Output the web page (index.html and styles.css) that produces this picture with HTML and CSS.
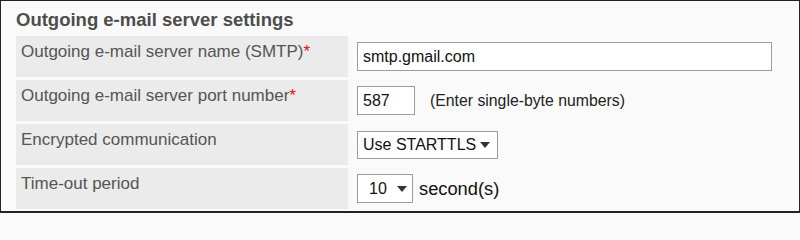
FILE: index.html
```html
<!DOCTYPE html>
<html lang="en">
<head>
<meta charset="utf-8">
<title>Outgoing e-mail server settings</title>
<link rel="stylesheet" href="styles.css">
</head>
<body>
<div class="frame">
  <h2 class="title">Outgoing e-mail server settings</h2>
  <div class="form">
    <div class="label">Outgoing e-mail server name (SMTP)<span class="req">*</span></div>
    <div class="value">
      <input class="input input-wide" type="text" value="smtp.gmail.com">
    </div>

    <div class="label">Outgoing e-mail server port number<span class="req">*</span></div>
    <div class="value">
      <input class="input input-port" type="text" value="587">
      <span class="hint">(Enter single-byte numbers)</span>
    </div>

    <div class="label">Encrypted communication</div>
    <div class="value">
      <div class="select select-tls"><span>Use STARTTLS</span><span class="arrow"></span></div>
    </div>

    <div class="label">Time-out period</div>
    <div class="value">
      <div class="select select-num"><span>10</span><span class="arrow"></span></div>
      <span class="unit">second(s)</span>
    </div>
  </div>
</div>
</body>
</html>
```
FILE: styles.css
```css
html, body {
  margin: 0;
  padding: 0;
  background: #fafafa;
}
body {
  font-family: "Liberation Sans", Arial, Helvetica, sans-serif;
  width: 800px;
  height: 213px;
  overflow: hidden;
}
.frame {
  box-sizing: border-box;
  width: 800px;
  height: 213px;
  border: 1px solid #222;
  border-bottom-width: 2px;
  background: #fafafa;
  padding: 8px 0 0 15px;
}
.title {
  margin: 0 0 5px 0;
  font-size: 18.5px;
  line-height: 22px;
  font-weight: bold;
  color: #4d4d4d;
}
.form {
  display: grid;
  grid-template-columns: 332px 1fr;
  grid-auto-rows: 41px;
  row-gap: 3px;
  column-gap: 3px;
}
.label {
  background: #ebebeb;
  color: #555;
  font-size: 17px;
  line-height: 20px;
  padding: 6px 0 0 5px;
  box-sizing: border-box;
}
.req {
  color: #e01010;
}
.value {
  display: flex;
  align-items: center;
  padding-left: 6px;
  color: #111;
}
.input {
  box-sizing: border-box;
  height: 29px;
  border: 1px solid #9c9c9c;
  background: #fff;
  font-family: "Liberation Sans", Arial, Helvetica, sans-serif;
  font-size: 16px;
  color: #111;
  padding: 0 0 0 5px;
  margin: 0;
  outline: none;
  border-radius: 0;
}
.input-wide {
  width: 415px;
}
.input-port {
  width: 58px;
}
.hint {
  margin-left: 15px;
  font-size: 15.8px;
  color: #222;
}
.select {
  box-sizing: border-box;
  display: flex;
  align-items: center;
  border: 1px solid #9c9c9c;
  background: #fff;
  font-size: 16px;
  color: #111;
}
.select-tls {
  width: 141px;
  height: 28px;
  padding-left: 5px;
}
.select-num {
  width: 56px;
  height: 29px;
  padding-left: 11px;
}
.arrow {
  width: 0;
  height: 0;
  border-left: 5px solid transparent;
  border-right: 5px solid transparent;
  border-top: 6px solid #333;
}
.select-tls .arrow {
  margin-left: 4px;
}
.select-num .arrow {
  margin-left: 10px;
}
.unit {
  margin-left: 6px;
  font-size: 18.3px;
  color: #111;
}
```
